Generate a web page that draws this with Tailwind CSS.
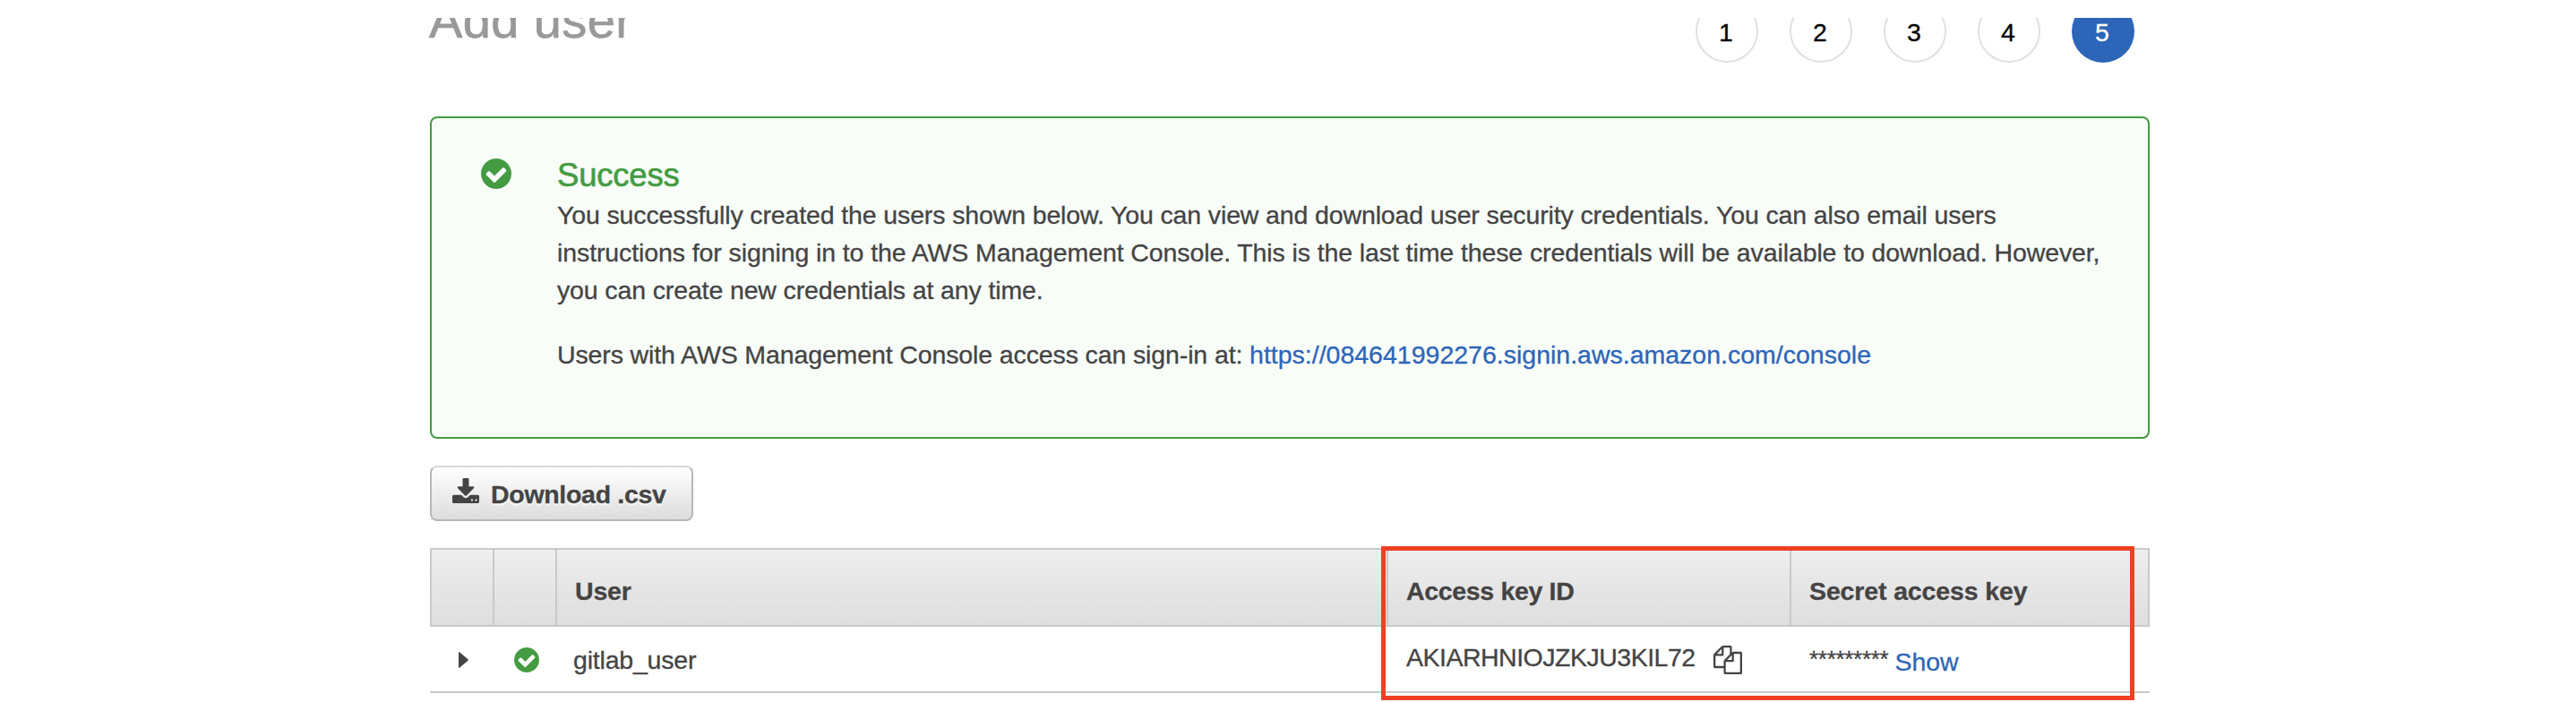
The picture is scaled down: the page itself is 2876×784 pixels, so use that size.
<!DOCTYPE html>
<html lang="en">
<head>
<meta charset="utf-8">
<title>Add user</title>
<script src="https://cdn.jsdelivr.net/npm/@tailwindcss/browser@4"></script>
</head>
<body class="bg-white text-[#444] text-[28.5px] leading-[42px] font-['Liberation_Sans',Arial,sans-serif] [-webkit-text-stroke:0.3px]">
<svg class="hidden">
  <symbol id="check" viewBox="128 128 1536 1536"><path d="M1412 734q0-28-18-46l-91-90q-19-19-45-19t-45 19l-408 407-226-226q-19-19-45-19t-45 19l-91 90q-18 18-18 46 0 27 18 45l362 362q19 19 45 19 27 0 46-19l543-543q18-18 18-45zm252 162q0 209-103 385.5t-279.5 279.5-385.5 103-385.5-103-279.5-279.5-103-385.5 103-385.5 279.5-279.5 385.5-103 385.5 103 279.5 279.5 103 385.5z"/></symbol>
</svg>
<main class="ml-[480px] w-[1920px] h-[784px] pt-5">
  <header class="-ml-1 pl-[3px] h-[110px] overflow-hidden flex justify-between items-start pr-[17px]">
    <h1 class="-mt-[27px] text-[56px] leading-[60px] tracking-[0.4px] text-[#999] [-webkit-text-stroke:0.7px]">Add user</h1>
    <ol class="-mt-5 flex gap-[35px] text-black">
      <li class="size-[70px] rounded-full border-2 border-[#e0e0e0] flex items-center justify-center pt-0.5 pr-0.5">1</li>
      <li class="size-[70px] rounded-full border-2 border-[#e0e0e0] flex items-center justify-center pt-0.5 pr-0.5">2</li>
      <li class="size-[70px] rounded-full border-2 border-[#e0e0e0] flex items-center justify-center pt-0.5 pr-0.5">3</li>
      <li class="size-[70px] rounded-full border-2 border-[#e0e0e0] flex items-center justify-center pt-0.5 pr-0.5">4</li>
      <li class="size-[70px] rounded-full bg-[#2d65b8] text-white flex items-center justify-center pt-0.5 pr-0.5">5</li>
    </ol>
  </header>

  <section class="h-[360px] border-2 border-[#449b42] rounded-lg bg-[#f8fdf8] flex pl-[55px] pt-[41px]">
    <svg class="size-[34px] mt-1 fill-[#449b42] shrink-0"><use href="#check"/></svg>
    <div class="pl-[51px]">
      <h2 class="text-[36.5px] leading-[46px] text-[#449b42] tracking-[-0.2px] [-webkit-text-stroke:0.6px]">Success</h2>
      <p class="whitespace-nowrap"><span class="tracking-[-0.13px]">You successfully created the users shown below. You can view and download user security credentials. You can also email users</span><br><span class="tracking-[-0.1px]">instructions for signing in to the AWS Management Console. This is the last time these credentials will be available to download. However,</span><br><span class="tracking-[-0.13px]">you can create new credentials at any time.</span></p>
      <p class="mt-[30px] whitespace-nowrap"><span class="tracking-[-0.12px]">Users with AWS Management Console access can sign-in at: </span><a class="text-[#2d65b8]">https://084641992276.signin.aws.amazon.com/console</a></p>
    </div>
  </section>

  <button class="mt-[30px] w-[294px] h-[62px] flex items-start rounded-lg border-2 border-[#b7b7b7] border-t-[#d9d9d9] bg-linear-to-b from-white to-[#dddddd] pl-[23px] pt-[9px] font-bold tracking-[-0.3px] [text-shadow:0_2px_2px_#fff]">
    <svg class="w-[30px] h-7 mt-[3px] mr-[13px] fill-[#444]" viewBox="64 0 1664 1536" preserveAspectRatio="none"><path d="M1344 1344q0-26-19-45t-45-19-45 19-19 45 19 45 45 19 45-19 19-45zm256 0q0-26-19-45t-45-19-45 19-19 45 19 45 45 19 45-19 19-45zm128-224v320q0 40-28 68t-68 28h-1472q-40 0-68-28t-28-68v-320q0-40 28-68t68-28h465l135 136q58 56 136 56t136-56l136-136h464q40 0 68 28t28 68zm-325-569q17 41-14 70l-448 448q-18 19-45 19t-45-19l-448-448q-31-29-14-70 17-39 59-39h256v-448q0-26 19-45t45-19h256q26 0 45 19t19 45v448h256q42 0 59 39z"/></svg>Download .csv
  </button>

  <div class="relative mt-[30px]">
    <div class="grid grid-cols-[70px_70px_928px_450px_398px] h-[88px] w-[1920px] border-2 border-[#c9c9c9] bg-linear-to-b from-[#eeeeee] to-[#dedede] font-bold">
      <div class="border-r-2 border-[#c9c9c9]"></div>
      <div class="border-r-2 border-[#c9c9c9]"></div>
      <div class="border-r-2 border-[#c9c9c9] flex items-center pl-5 pt-2 tracking-[-0.2px]">User</div>
      <div class="border-r-2 border-[#c9c9c9] flex items-center pl-5 pt-2 tracking-[-0.33px]">Access key ID</div>
      <div class="flex items-center pl-5 pt-2 tracking-[-0.13px]">Secret access key</div>
    </div>
    <div class="grid grid-cols-[72px_70px_928px_450px_400px] h-[74px] border-b-2 border-[#c9c9c9]">
      <div class="flex items-center pl-8 pt-0.5"><svg class="w-[11px] h-[18px] fill-[#444]" viewBox="0 0 11 18"><path d="M0 1Q0 0 1 .3L10.5 8.3Q11 9 10.5 9.7L1 17.7Q0 18 0 17z"/></svg></div>
      <div class="flex items-center pl-[22px] pt-0.5"><svg class="size-7 fill-[#449b42]"><use href="#check"/></svg></div>
      <div class="flex items-center pl-[18px] pt-0.5 tracking-[-0.2px]">gitlab_user</div>
      <div class="flex items-center pl-5">
        <span class="pb-1 tracking-[-0.5px]">AKIARHNIOJZKJU3KIL72</span>
        <svg class="size-8 ml-5 mt-0.5 fill-[#444]" viewBox="0 0 1792 1792"><path d="M1696 384q40 0 68 28t28 68v1216q0 40-28 68t-68 28h-960q-40 0-68-28t-28-68v-288h-544q-40 0-68-28t-28-68v-672q0-40 20-88t48-76l408-408q28-28 76-48t88-20h416q40 0 68 28t28 68v328q68-40 128-40h416zm-544 213l-299 299h299v-299zm-640-384l-299 299h299v-299zm196 647l316-316v-416h-384v416q0 40-28 68t-68 28h-416v640h512v-256q0-40 20-88t48-76zm956 804v-1152h-384v416q0 40-28 68t-68 28h-416v640h896z"/></svg>
      </div>
      <div class="flex items-center pl-5 pt-1.5"><span class="pb-1.5 text-[26px] tracking-[-0.3px]">*********</span><a class="pl-[7px] text-[#2d65b8]">Show</a></div>
    </div>
    <div class="absolute left-[1062px] -top-0.5 w-[841px] h-[172px] border-[5px] border-[#ee4023]"></div>
  </div>
</main>
</body>
</html>
